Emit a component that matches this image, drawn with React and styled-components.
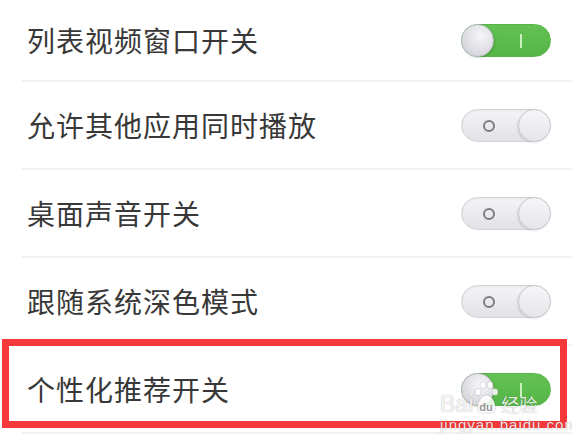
import React from "react"
import styled, { createGlobalStyle } from "styled-components"

const GlobalStyle = createGlobalStyle`
  html, body {
    margin: 0;
    padding: 0;
    background: #fff;
  }
  body {
    width: 572px;
    height: 444px;
    overflow: hidden;
    font-family: "Noto Sans CJK SC", "Noto Sans", sans-serif;
  }
`

const List = styled.div`
  display: flex;
  flex-direction: column;
`

const Row = styled.div`
  display: flex;
  align-items: center;
  justify-content: space-between;
  height: ${p => (p.first ? 80 : 86)}px;
  padding: 0 21px 0 27px;
  margin-bottom: 2px;
  position: relative;

  &::after {
    content: "";
    position: absolute;
    left: 22px;
    right: 0;
    bottom: -2px;
    height: 2px;
    background: #f1f1f1;
  }
`

const Label = styled.span`
  font-size: 28px;
  letter-spacing: 1px;
  color: #383838;
  font-weight: 400;
`

const Highlight = styled.div`
  position: relative;

  &::before {
    content: "";
    position: absolute;
    top: -7px;
    bottom: 6px;
    left: 2px;
    right: 5px;
    border: 7px solid #f5383a;
    pointer-events: none;
    z-index: 2;
  }
`

const Track = styled.div`
  width: 90px;
  height: 33px;
  border-radius: 17px;
  box-sizing: border-box;
  position: relative;
  background: ${p =>
    p.on
      ? "linear-gradient(#62c152, #55b647)"
      : "linear-gradient(#f4f4f6, #e2e2e6)"};
  border: 1px solid ${p => (p.on ? "#56b548" : "#d4d4d8")};
  box-shadow: ${p => (p.on ? "none" : "inset 0 1px 2px rgba(0,0,0,0.06)")};
`

const Knob = styled.div`
  position: absolute;
  top: -1px;
  ${p => (p.on ? "left: -1px;" : "right: -1px;")}
  width: 33px;
  height: 33px;
  border-radius: 50%;
  box-sizing: border-box;
  background: ${p =>
    p.on
      ? "radial-gradient(circle at 60% 35%, #f7f7fa, #d5d5dc 75%, #c4c4cc)"
      : "linear-gradient(#f6f6f8, #e6e6ea)"};
  border: 1px solid ${p => (p.on ? "#bdbdc4" : "#c8c8cd")};
  box-shadow: ${p => (p.on ? "1px 1px 2px rgba(0,0,0,0.15)" : "-1px 1px 2px rgba(0,0,0,0.1)")};
`

const OnMark = styled.span`
  position: absolute;
  left: 58px;
  top: 9px;
  width: 2px;
  height: 14px;
  background: #c9efbf;
`

const OffMark = styled.span`
  position: absolute;
  left: 21px;
  top: 10px;
  width: 12px;
  height: 12px;
  box-sizing: border-box;
  border-radius: 50%;
  border: 2px solid #7c7c82;
`

const Toggle = ({ on }) => (
  <Track on={on ? 1 : 0}>
    {on ? <OnMark /> : <OffMark />}
    <Knob on={on ? 1 : 0} />
  </Track>
)

const Watermark = styled.div`
  position: absolute;
  left: 440px;
  top: 392px;
  z-index: 3;
  display: flex;
  flex-direction: column;
  align-items: flex-start;
  color: rgba(255, 255, 255, 0.9);
  font-family: "Liberation Sans", "Noto Sans CJK SC", sans-serif;
  text-shadow: 0 0 1px rgba(0, 0, 0, 0.4);
  pointer-events: none;
`

const Brand = styled.div`
  display: flex;
  align-items: flex-end;
  font-size: 23px;
  line-height: 24px;
  height: 24px;
`

const PawBox = styled.span`
  position: relative;
  width: 25px;
  height: 24px;
  margin: 0 2px 0 1px;
`

const PawText = styled.span`
  position: absolute;
  left: 5px;
  bottom: 3px;
  font-size: 11px;
  line-height: 11px;
  font-weight: 700;
  color: rgba(120, 120, 120, 0.8);
  text-shadow: none;
`

const Cn = styled.span`
  font-family: "Noto Sans CJK SC", sans-serif;
  font-size: 18px;
  line-height: 24px;
`

const Domain = styled.div`
  font-size: 15px;
  line-height: 17px;
  letter-spacing: 1px;
`

const Paw = () => (
  <svg width="25" height="38" viewBox="0 0 25 38" style={{ position: "absolute", left: 0, bottom: 0 }}>
    <g fill="rgba(255,255,255,0.85)" stroke="rgba(0,0,0,0.2)" strokeWidth="0.6">
      <ellipse cx="4" cy="14" rx="3" ry="3.6" />
      <ellipse cx="9" cy="7" rx="3" ry="3.6" />
      <ellipse cx="16" cy="7" rx="3" ry="3.6" />
      <ellipse cx="21" cy="14" rx="3" ry="3.6" />
      <path d="M12.5 17 C7 17 3 25 3.5 31 C4 36 10 35 12.5 35 C15 35 21 36 21.5 31 C22 25 18 17 12.5 17 Z" />
    </g>
  </svg>
)

const items = [
  { label: "列表视频窗口开关", on: true },
  { label: "允许其他应用同时播放", on: false },
  { label: "桌面声音开关", on: false },
  { label: "跟随系统深色模式", on: false },
]

const App = () => (
  <>
    <GlobalStyle />
    <List>
      {items.map((it, i) => (
        <Row key={it.label} first={i === 0}>
          <Label>{it.label}</Label>
          <Toggle on={it.on} />
        </Row>
      ))}
      <Highlight>
        <Row>
          <Label>个性化推荐开关</Label>
          <Toggle on />
        </Row>
      </Highlight>
    </List>
    <Watermark>
      <Brand>
        Bai
        <PawBox>
          <Paw />
          <PawText>du</PawText>
        </PawBox>
        <Cn>经验</Cn>
      </Brand>
      <Domain>jingyan.baidu.com</Domain>
    </Watermark>
  </>
)

export default App
